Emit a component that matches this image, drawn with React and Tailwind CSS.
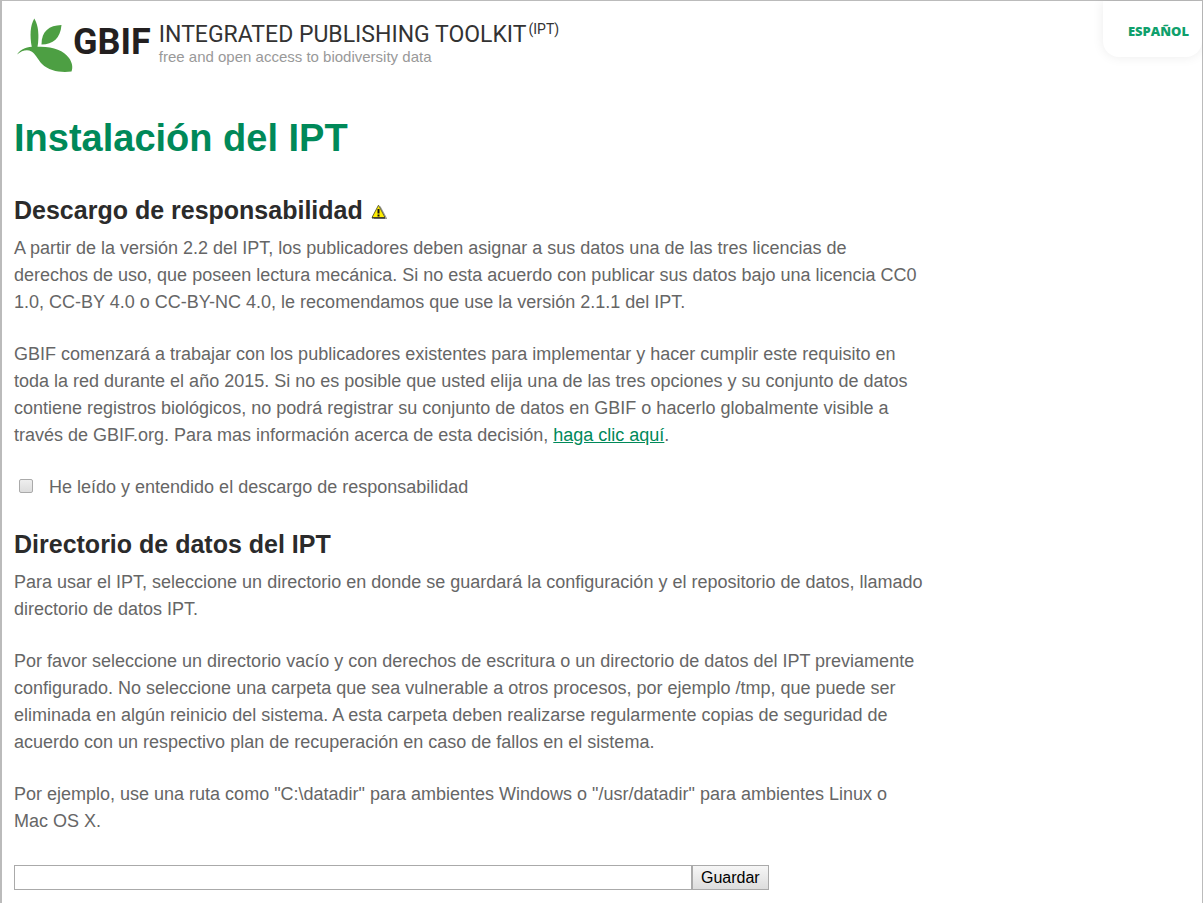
function Leaf() {
  return (
    <svg width="56" height="56" viewBox="0 0 56 56" fill="#4d9f43" aria-hidden="true" className="shrink-0">
      <path d="M17.3 0.5C13.200 7 12.600 18 14.800 29L20.500 29C22.300 18 21.500 7 17.300 0.500Z" />
      <path d="M44.500 7C32 7.500 24.500 13 24.500 26.500C36 26.500 43.500 20 44.500 7Z" />
      <path d="M0 36.500C5 29.500 12 28.500 20 28.800C35 28 46.500 32 52 40C55.500 45 56 49.500 54.500 53.500C44 55 32 53 25 46C20.500 41 18.500 36 14.500 33.500C10 31 5 32.500 0 36.500Z" />
    </svg>
  );
}

function Warning() {
  return (
    <svg width="16" height="16" viewBox="0 0 16 16" role="img" aria-label="Advertencia" className="mt-1">
      <path d="M9 2.500L15.500 14.500H3" fill="none" stroke="#999" strokeWidth="1.200" />
      <path d="M7.500 1.200L14 13.500H1Z" fill="#ffee00" stroke="#666633" strokeWidth="1" strokeLinejoin="round" />
      <path d="M1 14H14" stroke="#222" strokeWidth="1" />
      <path d="M7.500 5V9.500" stroke="#111" strokeWidth="2" />
      <path d="M7.500 10.500V12.500" stroke="#111" strokeWidth="2" />
    </svg>
  );
}

function Section({ title, icon, children }) {
  return (
    <section className="flex flex-col gap-[25px]">
      <div>
        <h2 className="mb-[9px] flex items-center gap-2 text-[25px] leading-8 font-bold text-[#2b2b2b]">
          {title}
          {icon}
        </h2>
        {children[0]}
      </div>
      {children.slice(1)}
    </section>
  );
}

export default function App() {
  return (
    <div className="min-h-screen border-t border-r border-l-2 border-[#bbb] bg-white font-['Liberation_Sans',Arial,sans-serif] text-[18px] leading-[27px] text-[#666]">
      <header className="flex items-start justify-between">
        <div className="flex pt-[17px] pl-[15px]">
          <Leaf />
          <span className="font-[Roboto,sans-serif] text-[36px] leading-[48px] font-bold text-[#231f20]">GBIF</span>
          <div className="pl-2 whitespace-nowrap">
            <p className="flex font-[Roboto,sans-serif] text-[23px] leading-[34px] text-[#333]">
              INTEGRATED PUBLISHING TOOLKIT
              <span className="pl-[2px] text-[14px] leading-[22px]">(IPT)</span>
            </p>
            <p className="text-[15px] leading-[9px] text-[#999]">free and open access to biodiversity data</p>
          </div>
        </div>
        <a href="#es" className="rounded-b-[16px] pt-[18px] pr-[13px] pb-[14px] pl-[25px] font-['Open_Sans',sans-serif] text-[13px] leading-6 font-extrabold text-[#0fa06c] shadow-[0_0_12px_rgba(0,0,0,0.08)]">
          ESPAÑOL
        </a>
      </header>
      <main className="max-w-[933px] px-3 pt-10">
        <h1 className="mb-8 text-[38px] leading-[48px] font-bold text-[#008959]">Instalación del IPT</h1>
        <form className="flex flex-col gap-[27px]" onSubmit={(e) => e.preventDefault()}>
          <Section title="Descargo de responsabilidad" icon={<Warning />}>
            <p key="a">
              A partir de la versión 2.2 del IPT, los publicadores deben asignar a sus datos una de las tres licencias de derechos de uso, que poseen lectura mecánica. Si no esta acuerdo con publicar sus datos bajo una licencia CC0 1.0, CC-BY 4.0 o CC-BY-NC 4.0, le recomendamos que use la versión 2.1.1 del IPT.
            </p>
            <p key="b">
              GBIF comenzará a trabajar con los publicadores existentes para implementar y hacer cumplir este requisito en toda la red durante el año 2015. Si no es posible que usted elija una de las tres opciones y su conjunto de datos contiene registros biológicos, no podrá registrar su conjunto de datos en GBIF o hacerlo globalmente visible a través de GBIF.org. Para mas información acerca de esta decisión,{" "}
              <a href="#decision" className="text-[#008959] underline">haga clic aquí</a>.
            </p>
            <div key="c" className="flex items-start pl-[5px]">
              <input id="read" type="checkbox" className="mt-[5px] h-[14px] w-[14px] appearance-none rounded-[2px] border border-[#aaa] bg-linear-to-b from-[#eee] to-[#ddd] checked:bg-[#008959]" />
              <label htmlFor="read" className="pl-4">He leído y entendido el descargo de responsabilidad</label>
            </div>
          </Section>
          <Section title="Directorio de datos del IPT">
            <p key="a">
              Para usar el IPT, seleccione un directorio en donde se guardará la configuración y el repositorio de datos, llamado directorio de datos IPT.
            </p>
            <p key="b">
              Por favor seleccione un directorio vacío y con derechos de escritura o un directorio de datos del IPT previamente configurado. No seleccione una carpeta que sea vulnerable a otros procesos, por ejemplo /tmp, que puede ser eliminada en algún reinicio del sistema. A esta carpeta deben realizarse regularmente copias de seguridad de acuerdo con un respectivo plan de recuperación en caso de fallos en el sistema.
            </p>
            <p key="c">
              Por ejemplo, use una ruta como "C:\datadir" para ambientes Windows o "/usr/datadir" para ambientes Linux o Mac OS X.
            </p>
          </Section>
          <div className="flex pt-[3px]">
            <input type="text" aria-label="Directorio de datos del IPT" className="h-[25px] w-[678px] border border-[#aaa] bg-white px-1 text-[16px] text-black" />
            <button type="submit" className="h-[25px] border border-[#aaa] bg-linear-to-b from-[#f6f6f6] to-[#ddd] px-2 text-[16px] leading-[23px] text-black">Guardar</button>
          </div>
        </form>
      </main>
    </div>
  );
}
